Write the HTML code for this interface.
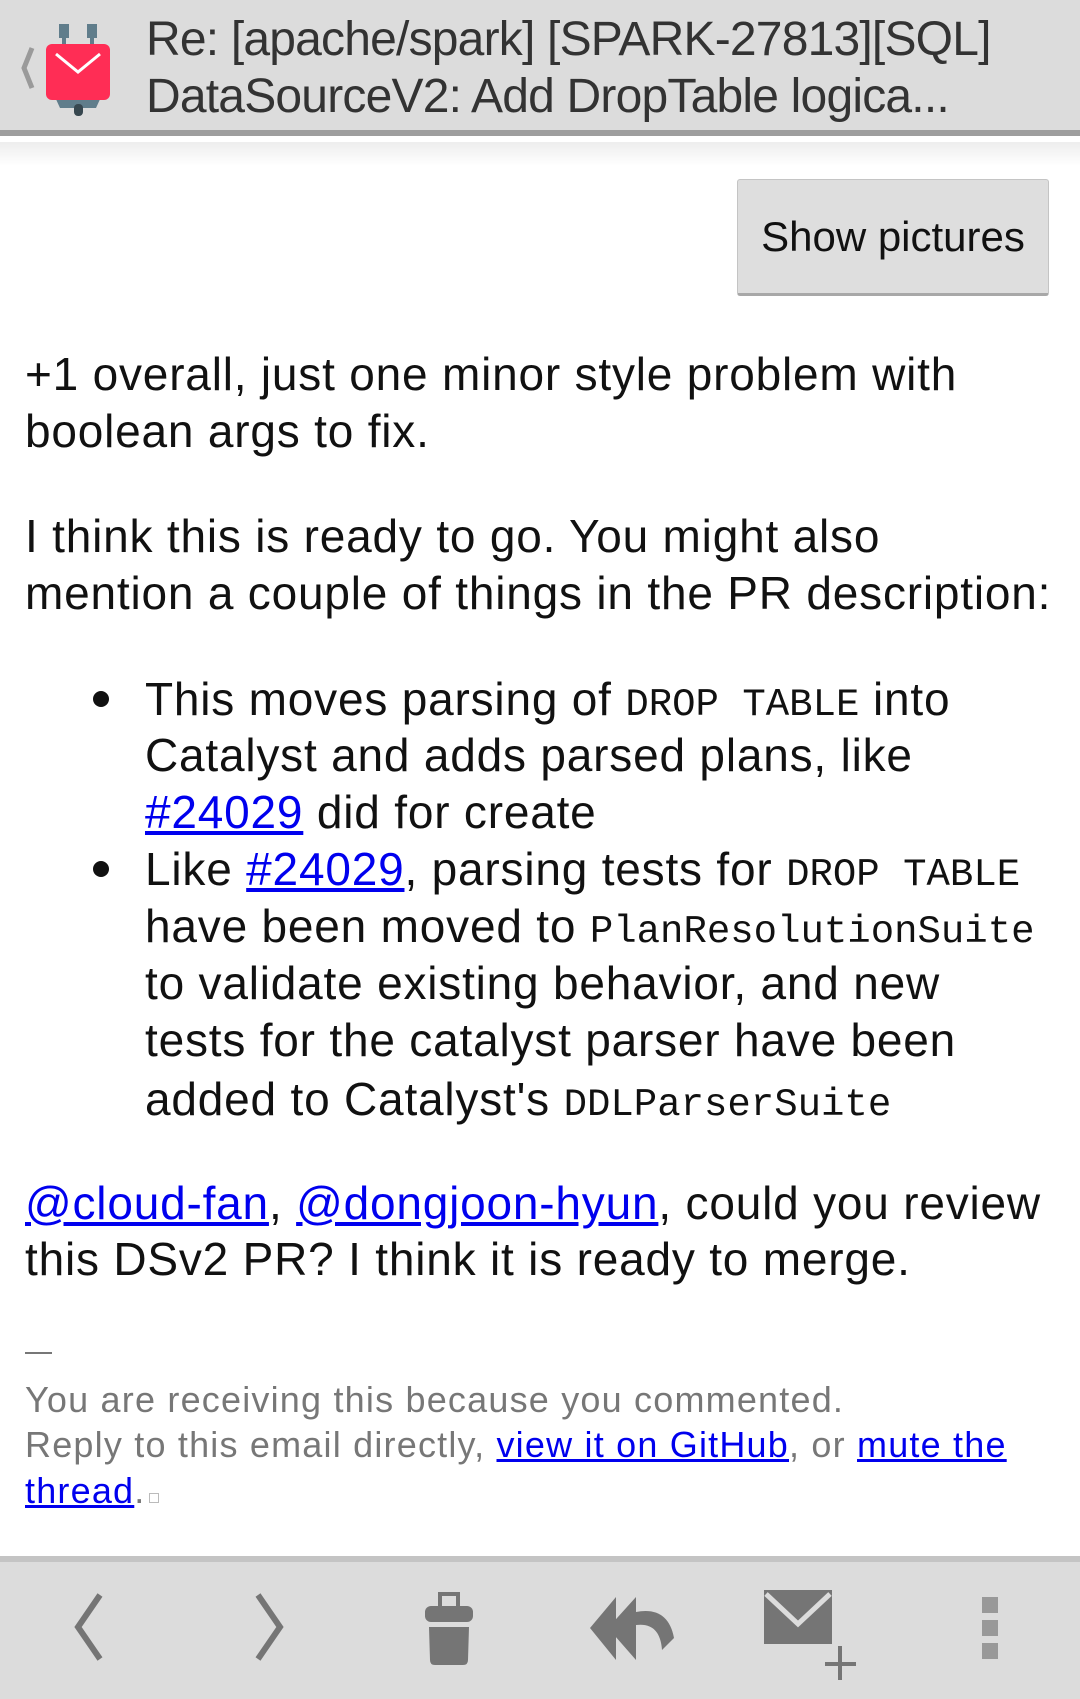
<!DOCTYPE html>
<html><head><meta charset="utf-8"><style>
*{margin:0;padding:0;box-sizing:border-box}
body{width:1080px;height:1699px;background:#fff;position:relative;overflow:hidden;font-family:"Liberation Sans",sans-serif;color:#111}
.hdr{position:absolute;left:0;top:0;width:1080px;height:136px;background:#dcdcdc;border-bottom:6px solid #9e9e9e}
.shadow{position:absolute;left:0;top:142px;width:1080px;height:24px;background:linear-gradient(#ededed,#fff)}
.t{position:absolute;left:146px;font-size:48px;color:#333;white-space:nowrap;letter-spacing:-0.8px}
.l{position:absolute;white-space:nowrap;font-size:46px;line-height:56px;letter-spacing:0.8px}
code{font-family:"Liberation Mono",monospace;font-size:39px;letter-spacing:0}
a{color:#0000ee;text-decoration:underline}
.btn{position:absolute;left:737px;top:179px;width:312px;height:117px;background:#dedede;border:1px solid #c4c4c4;border-bottom:3px solid #a8a8a8;border-radius:3px;font-size:42px;text-align:center;line-height:114px;color:#111}
.bul{position:absolute;left:93px;width:16px;height:16px;border-radius:50%;background:#111}
.f{position:absolute;left:25px;font-size:36px;color:#777;white-space:nowrap;line-height:44px;letter-spacing:1.2px}
.bar{position:absolute;left:0;top:1556px;width:1080px;height:143px;background:#dcdcdc;border-top:6px solid #c4c4c4}
</style></head><body>
<div class="hdr">
 <svg style="position:absolute;left:10px;top:24px" width="120" height="92" viewBox="0 0 120 92">
  <path d="M22 24 L14 44 L22 64" fill="none" stroke="#9a9a9a" stroke-width="5"/>
  <rect x="49" y="0" width="10" height="14" fill="#607d8b"/><rect x="77" y="0" width="10" height="14" fill="#607d8b"/>
  <rect x="52" y="12" width="4" height="10" fill="#607d8b"/><rect x="80" y="12" width="4" height="10" fill="#607d8b"/>
  <path d="M40 62 L96 62 L86 84 L50 84 Z" fill="#607d8b"/>
  <rect x="64" y="80" width="9" height="12" rx="4" fill="#37474f"/>
  <rect x="36" y="20" width="64" height="56" rx="6" fill="#ff2d55"/>
  <path d="M46 30 L68 48 L90 30" fill="none" stroke="#fff" stroke-width="3"/>
 </svg>
 <div class="t" style="top:12px">Re: [apache/spark] [SPARK-27813][SQL]</div>
 <div class="t" style="top:69px">DataSourceV2: Add DropTable logica...</div>
</div>
<div class="shadow"></div>
<div class="btn">Show pictures</div>

<div class="l" style="left:25px;top:346px">+1 overall, just one minor style problem with</div>
<div class="l" style="left:25px;top:403px">boolean args to fix.</div>
<div class="l" style="left:25px;top:508px">I think this is ready to go. You might also</div>
<div class="l" style="left:25px;top:565px">mention a couple of things in the PR description:</div>

<div class="bul" style="top:691px"></div>
<div class="l" style="left:145px;top:671px">This moves parsing of <code>DROP&nbsp;TABLE</code> into</div>
<div class="l" style="left:145px;top:727px">Catalyst and adds parsed plans, like</div>
<div class="l" style="left:145px;top:784px"><a>#24029</a> did for create</div>
<div class="bul" style="top:861px"></div>
<div class="l" style="left:145px;top:841px">Like <a>#24029</a>, parsing tests for <code>DROP&nbsp;TABLE</code></div>
<div class="l" style="left:145px;top:898px">have been moved to <code>PlanResolutionSuite</code></div>
<div class="l" style="left:145px;top:955px">to validate existing behavior, and new</div>
<div class="l" style="left:145px;top:1012px">tests for the catalyst parser have been</div>
<div class="l" style="left:145px;top:1071px">added to Catalyst's <code>DDLParserSuite</code></div>

<div class="l" style="left:25px;top:1175px"><a>@cloud-fan</a>, <a>@dongjoon-hyun</a>, could you review</div>
<div class="l" style="left:25px;top:1231px">this DSv2 PR? I think it is ready to merge.</div>

<div style="position:absolute;left:25px;top:1352px;width:27px;height:2px;background:#777"></div>
<div class="f" style="top:1378px">You are receiving this because you commented.</div>
<div class="f" style="top:1423px">Reply to this email directly, <a>view it on GitHub</a>, or <a>mute the</a></div>
<div class="f" style="top:1469px"><a>thread</a>.<span style="display:inline-block;width:10px;height:10px;border:1px solid #bbb;margin-left:4px"></span></div>

<div class="bar">
 <svg width="1080" height="137" viewBox="0 1562 1080 137" style="position:absolute;left:0;top:0">
  <path d="M100 1595 L78 1627 L100 1659" fill="none" stroke="#757575" stroke-width="6"/>
  <path d="M258 1595 L280 1627 L258 1659" fill="none" stroke="#757575" stroke-width="6"/>
  <rect x="440" y="1594" width="18" height="14" fill="none" stroke="#757575" stroke-width="4"/>
  <rect x="425" y="1606" width="48" height="16" rx="6" fill="#757575"/>
  <path d="M429 1627 L469 1627 L468 1660 Q468 1665 463 1665 L435 1665 Q430 1665 430 1660 Z" fill="#757575"/>
  <path d="M616 1597 L590 1628 L616 1660 Z M636 1597 L608 1628 L636 1660 L636 1625 Q660 1622 662 1650 L674 1638 Q668 1606 636 1612 Z" fill="#757575"/>
  <rect x="764" y="1590" width="68" height="54" fill="#757575"/>
  <path d="M766 1594 L798 1624 L830 1594" fill="none" stroke="#dcdcdc" stroke-width="5"/>
  <path d="M840 1646 V1680 M825 1664 H856" stroke="#757575" stroke-width="4"/>
  <rect x="982" y="1597" width="16" height="16" fill="#999"/>
  <rect x="982" y="1620" width="16" height="16" fill="#999"/>
  <rect x="982" y="1643" width="16" height="16" fill="#999"/>
 </svg>
</div>
</body></html>
